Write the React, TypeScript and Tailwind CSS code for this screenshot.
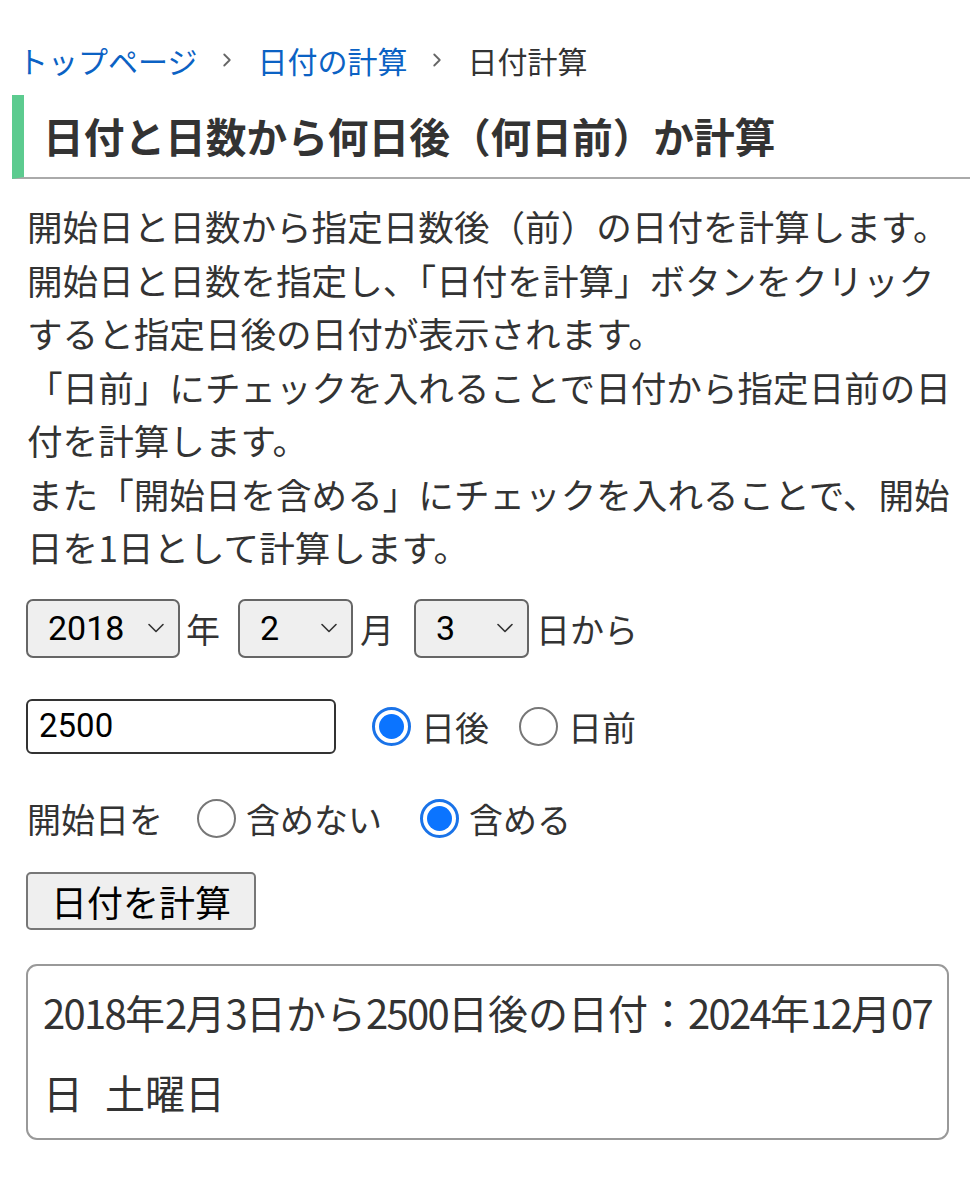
import { ChevronRight, ChevronDown } from "lucide-react"

const Radio = ({ checked, label }: { checked: boolean; label: string }) => (
  <label className="flex items-center gap-[10px]">
    {checked ? (
      <span className="w-[39px] h-[39px] rounded-full border-[3px] border-[#1a73e8] flex items-center justify-center">
        <span className="w-[25px] h-[25px] rounded-full bg-[#0b74ff]" />
      </span>
    ) : (
      <span className="w-[39px] h-[39px] rounded-full border-2 border-[#777]" />
    )}
    <span>{label}</span>
  </label>
)

const Select = ({ value, width }: { value: string; width: string }) => (
  <div
    className={`${width} h-[59px] flex items-center justify-between bg-[#efefef] border-2 border-[#666] rounded-[7px] pl-[20px] pr-[8px] text-[34px] text-black font-['Roboto','Noto_Sans_CJK_JP',sans-serif]`}
  >
    <span>{value}</span>
    <ChevronDown size={28} strokeWidth={1.4} className="text-[#333]" />
  </div>
)

// narrow digits like the reference's result font
const N = ({ children }: { children: string }) => (
  <span className="tracking-[-1.7px]">{children}</span>
)

export default function App() {
  return (
    <div className="w-[970px] min-h-[1200px] bg-white text-[#333] font-['Noto_Sans_CJK_JP','Noto_Sans',sans-serif]">
      {/* breadcrumb */}
      <nav className="pt-[38px] pl-[18px] flex items-center text-[30px] leading-[44px]">
        <span className="text-[#0b62c4]">トップページ</span>
        <ChevronRight size={22} strokeWidth={2} className="text-[#666] mx-[19px]" />
        <span className="text-[#0b62c4]">日付の計算</span>
        <ChevronRight size={22} strokeWidth={2} className="text-[#666] mx-[19px]" />
        <span>日付計算</span>
      </nav>

      {/* heading */}
      <h1 className="mt-[13px] ml-[12px] h-[84px] flex items-center border-l-[12px] border-l-[#5ccb8f] border-b-2 border-b-[#aaa] pl-[19px] text-[40.7px] font-bold">
        日付と日数から何日後（何日前）か計算
      </h1>

      <div className="pl-[27px] pr-[15px]">
        <p className="mt-[20px] text-[35.6px] leading-[53.5px]">
          開始日と日数から指定日数後（前）の日付を計算します。
          <br />
          開始日と日数を指定し、「日付を計算」ボタンをクリックすると指定日後の日付が表示されます。
          <br />
          「日前」にチェックを入れることで日付から指定日前の日付を計算します。
          <br />
          また「開始日を含める」にチェックを入れることで、開始日を1日として計算します。
        </p>

        <div className="-ml-[1px] mt-[25px] flex items-center text-[34px]">
          <Select value="2018" width="w-[154px]" />
          <span className="ml-[6px] mr-[18px]">年</span>
          <Select value="2" width="w-[115px]" />
          <span className="ml-[7px] mr-[20px]">月</span>
          <Select value="3" width="w-[115px]" />
          <span className="ml-[7px]">日から</span>
        </div>

        <div className="-ml-[1px] mt-[41px] flex items-center text-[34px]">
          <div className="w-[310px] h-[55px] border-2 border-[#333] rounded-[6px] flex items-center pl-[11px] text-[33px] text-black font-['Roboto',sans-serif]">
            2500
          </div>
          <div className="ml-[36px] flex items-center gap-[30px]">
            <Radio checked label="日後" />
            <Radio checked={false} label="日前" />
          </div>
        </div>

        <div className="mt-[40px] flex items-center text-[34px] leading-[50px]">
          <span>開始日を</span>
          <div className="ml-[34px] flex items-center gap-[38px]">
            <Radio checked={false} label="含めない" />
            <Radio checked label="含める" />
          </div>
        </div>

        <button className="-ml-[1px] mt-[28px] w-[230px] h-[58px] bg-[#efefef] border-2 border-[#777] rounded-[5px] text-[36px] text-black flex items-center justify-center">
          日付を計算
        </button>

        <div className="-ml-[1px] mt-[34px] mr-[6px] border-2 border-[#999] rounded-[11px] pl-[15px] pr-[10px] py-[6px] text-[40px] leading-[80px] text-[#333] whitespace-nowrap">
          <N>2018</N>年<N>2</N>月<N>3</N>日から<N>2500</N>日後の日付：<N>2024</N>年<N>12</N>月<N>07</N>
          <br />
          日<span className="ml-[22px]">土曜日</span>
        </div>
      </div>
    </div>
  )
}
